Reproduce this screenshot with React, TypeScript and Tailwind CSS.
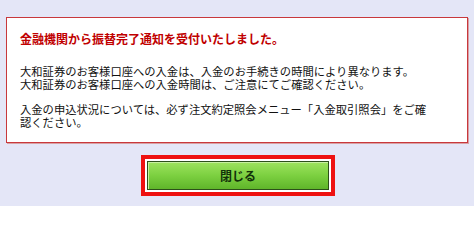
const FONT = "font-['MS_PGothic','Noto_Sans_CJK_JP',sans-serif]";

export default function App() {
  return (
    <div className={`h-[206px] w-[474px] bg-[#e4e6f7] px-[6px] pt-[17px] ${FONT}`}>
      <div className="h-[126px] border border-[#c8383c] bg-white px-[13px] pt-[14px] shadow-[1px_1px_0_#d9a0a4]">
        <p className="text-[12px] leading-[13px] font-bold text-[#c00000]">金融機関から振替完了通知を受付いたしました。</p>
        <p className="mt-[20px] text-[11.3px] leading-[13px] text-[#111]">
          大和証券のお客様口座への入金は、入金のお手続きの時間により異なります。
          <br />
          大和証券のお客様口座への入金時間は、ご注意にてご確認ください。
        </p>
        <p className="mt-[12px] pr-[18px] text-[11.3px] leading-[13px] text-[#111]">
          入金の申込状況については、必ず注文約定照会メニュー「入金取引照会」をご確認ください。
        </p>
      </div>
      <div className="mt-[12px] flex justify-center">
        <div className="ml-[2px] border-[4px] border-[#ee1111] bg-white p-[2px]">
          <button
            className="flex h-[29px] w-[182px] items-center justify-center border border-[#2d4f1a] bg-gradient-to-b from-[#9ee35e] via-[#7cd040] to-[#5fb52a] text-[12px] font-bold text-[#12300a] shadow-[inset_1px_1px_0_#c8f0a0]"
            type="button"
          >
            閉じる
          </button>
        </div>
      </div>
    </div>
  );
}
